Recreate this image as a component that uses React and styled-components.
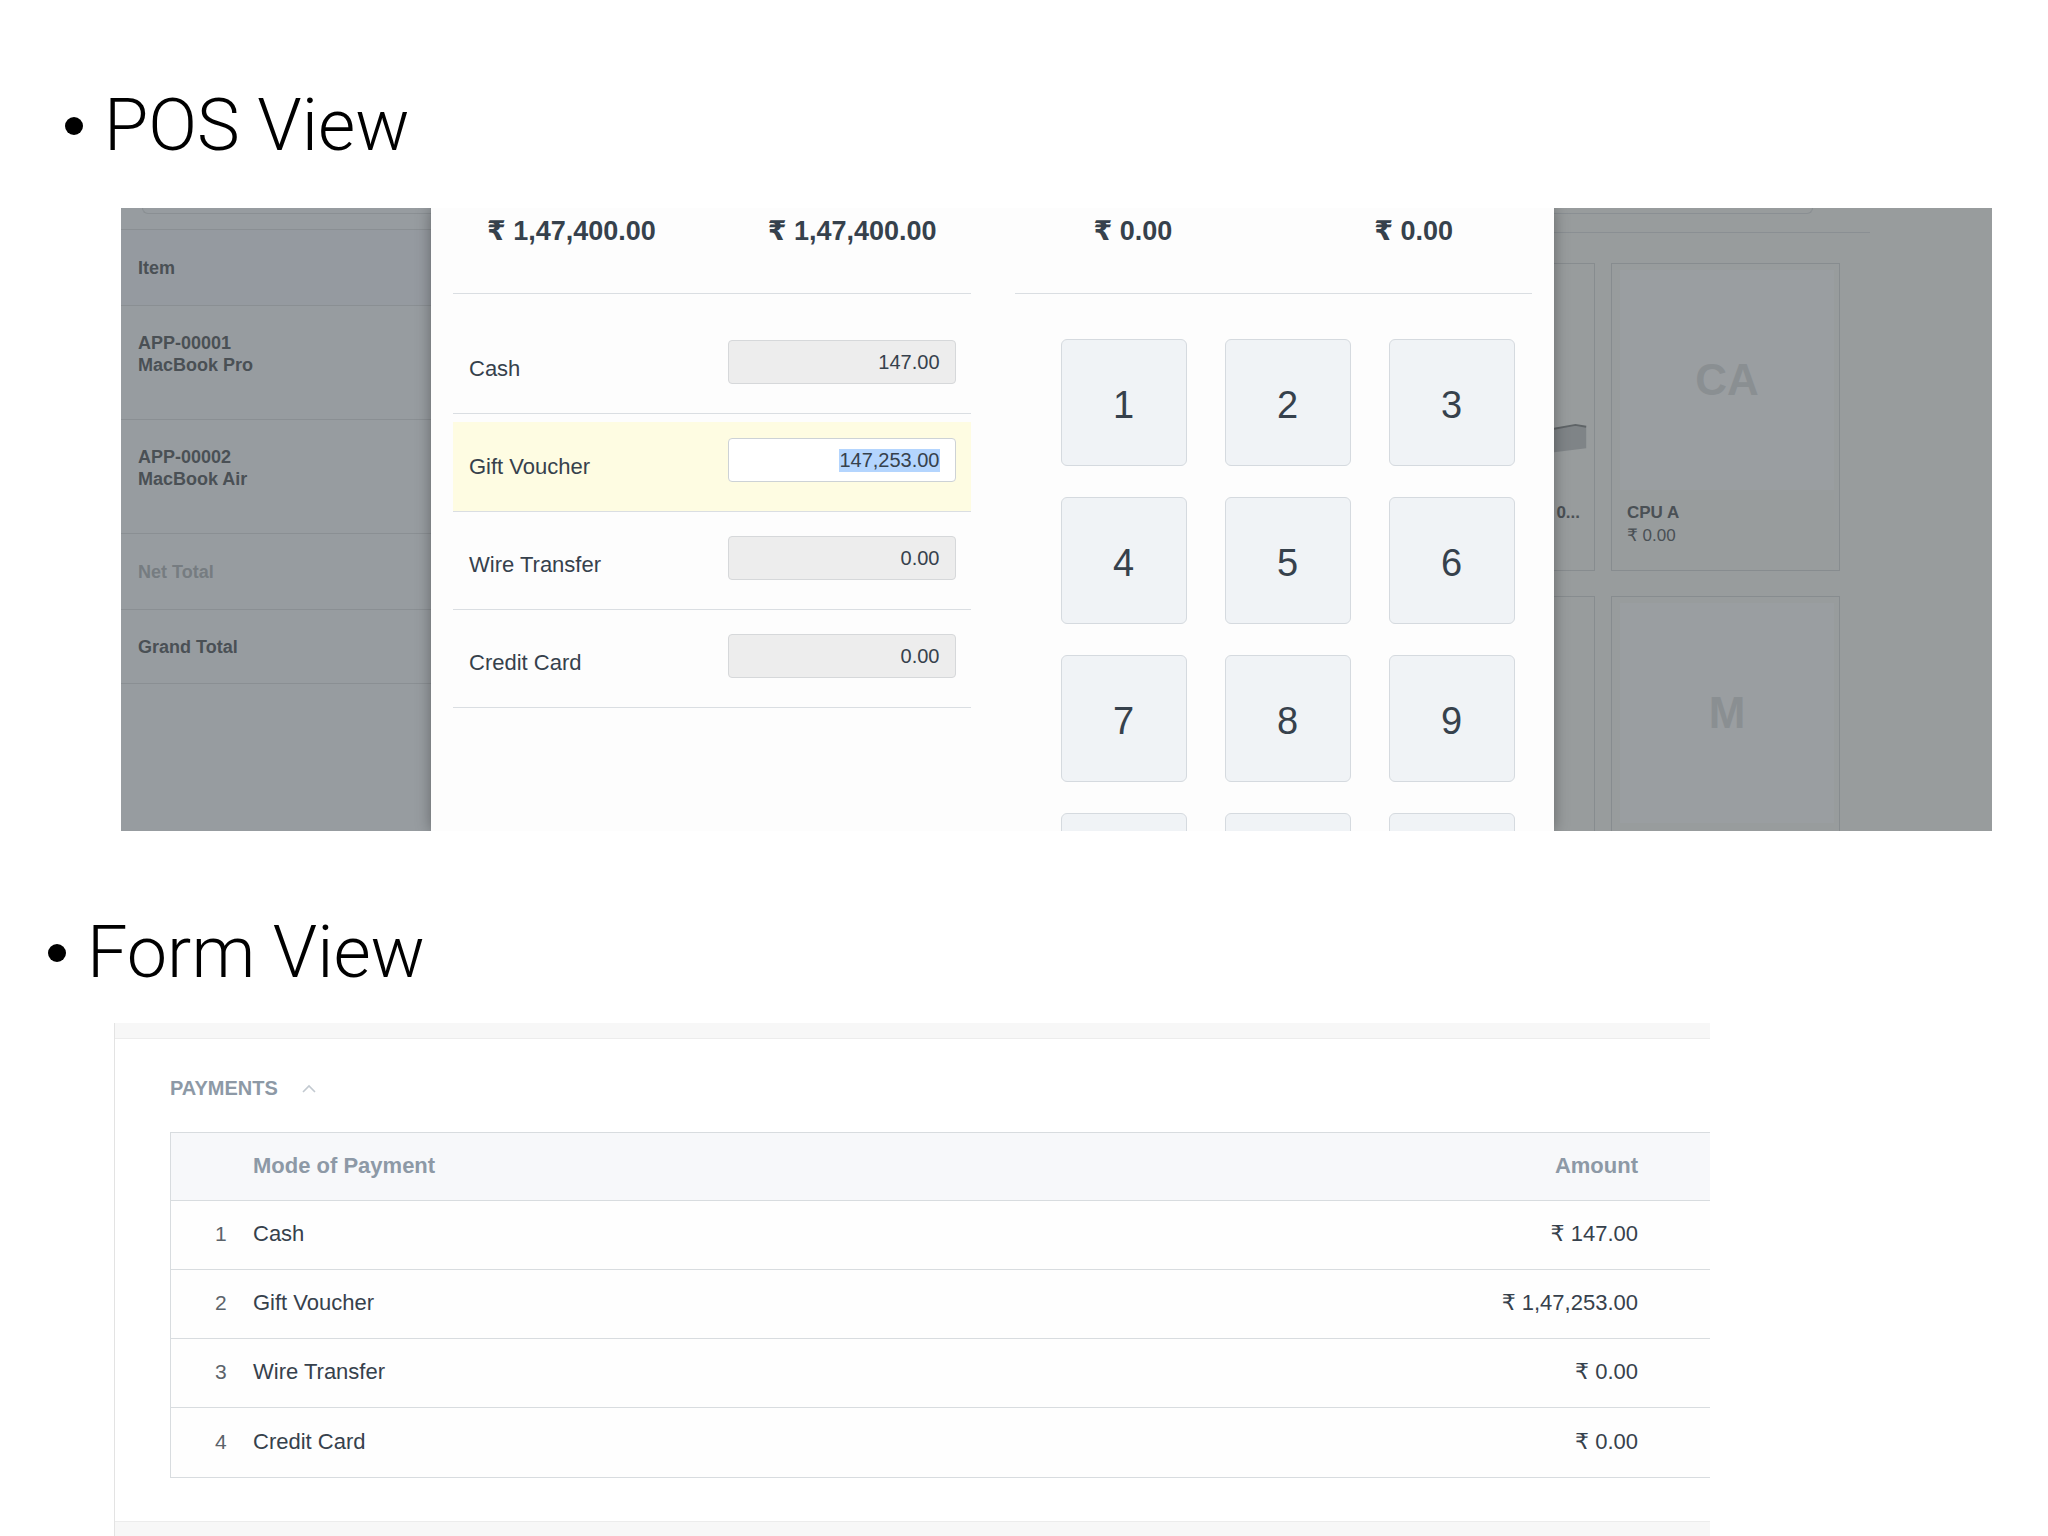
import React from 'react';
import styled, { createGlobalStyle } from 'styled-components';

const GlobalStyle = createGlobalStyle`
  html, body {
    margin: 0;
    padding: 0;
    background: #fff;
  }
  body {
    font-family: "Liberation Sans", Arial, "DejaVu Sans", sans-serif;
    color: #36414c;
  }
  * {
    box-sizing: border-box;
  }
`;

const Page = styled.div`
  display: flex;
  flex-direction: column;
  width: 2048px;
  height: 1536px;
  padding-top: 90px;
  overflow: hidden;
`;

const Heading = styled.h1`
  display: flex;
  align-items: center;
  gap: 21px;
  height: 72px;
  flex-shrink: 0;
  margin: ${(p) => p.$top}px 0 0 ${(p) => p.$indent}px;
  font-family: Roboto, "Liberation Sans", sans-serif;
  font-weight: 300;
  font-size: 72px;
  line-height: 72px;
  color: #000;
`;

const Bullet = styled.span`
  width: 18px;
  height: 18px;
  flex-shrink: 0;
  border-radius: 50%;
  background: #000;
`;

/* ---------- POS screenshot ---------- */

const PosShot = styled.div`
  display: flex;
  flex-shrink: 0;
  width: 1871px;
  height: 623px;
  margin: 46px 0 0 121px;
  overflow: hidden;
`;

const SidePane = styled.div`
  display: flex;
  flex-direction: column;
  width: ${(p) => p.$width}px;
  flex-shrink: 0;
  background: ${(p) => p.$bg};
  overflow: hidden;

  & > * {
    flex-shrink: 0;
  }
`;

const SearchEdge = styled.div`
  height: 6px;
  border: 1px solid #8a8f93;
  border-top: none;
  ${(p) =>
    p.$side === 'left'
      ? 'margin-left: 21px; border-right: none; border-radius: 0 0 0 6px;'
      : 'width: 259px; border-left: none; border-radius: 0 0 6px 0;'}
`;

const CartRow = styled.div`
  display: flex;
  flex-direction: column;
  justify-content: ${(p) => (p.$item ? 'flex-start' : 'center')};
  height: ${(p) => p.$h}px;
  padding: ${(p) => (p.$item ? '26px' : '0')} 17px 0;
  border-bottom: 1px solid #8a8f93;
  background: ${(p) => (p.$head ? '#959aa0' : 'transparent')};
  ${(p) => p.$head && 'margin-top: 15px; border-top: 1px solid #8a8f93;'}
`;

const CartText = styled.div`
  font-size: 18px;
  font-weight: bold;
  line-height: 22px;
  color: ${(p) => (p.$muted ? '#767c81' : '#4a5055')};
`;

const Modal = styled.div`
  position: relative;
  z-index: 1;
  display: grid;
  grid-template-columns: 1fr 1fr;
  width: 1123px;
  flex-shrink: 0;
  background: #fdfdfd;
  box-shadow: 0 0 14px rgba(0, 0, 0, 0.35);
`;

const ModalHalf = styled.div`
  display: flex;
  flex-direction: column;
`;

const AmountRow = styled.div`
  display: grid;
  grid-template-columns: 1fr 1fr;
  height: 85px;
  padding-top: 7px;
`;

const Amount = styled.div`
  text-align: center;
  font-size: 27px;
  font-weight: bold;
  line-height: 32px;
  color: #36414c;
`;

const HalfBody = styled.div`
  margin: 0 22px;
  border-top: 1px solid #dadee2;
`;

const PaymentList = styled.div`
  padding-top: 22px;
`;

const PayRow = styled.div`
  padding-top: 8px;
  border-bottom: 1px solid #dadee2;
`;

const PayInner = styled.div`
  display: flex;
  justify-content: space-between;
  align-items: center;
  height: 89px;
  padding: 0 15px 0 16px;
  background: ${(p) => (p.$active ? '#fefce2' : 'transparent')};
`;

const PayLabel = styled.span`
  font-size: 22px;
  color: #36414c;
`;

const PayInput = styled.div`
  display: flex;
  align-items: center;
  justify-content: flex-end;
  align-self: flex-start;
  width: 228px;
  height: 44px;
  margin-top: 16px;
  padding-right: 15px;
  border: 1px solid ${(p) => (p.$active ? '#cdd2d6' : '#d6d8da')};
  border-radius: 4px;
  background: ${(p) => (p.$active ? '#fff' : '#ededed')};
  font-size: 20px;
  color: #36414c;
`;

const Selected = styled.span`
  background: #b4d5fe;
`;

const Keypad = styled.div`
  display: grid;
  grid-template-columns: repeat(3, 126px);
  column-gap: 38px;
  row-gap: 31px;
  padding: 45px 0 0 46px;
`;

const Key = styled.div`
  display: flex;
  align-items: center;
  justify-content: center;
  height: 127px;
  padding-top: 6px;
  border: 1px solid #d5dadf;
  border-radius: 6px;
  background: #f0f3f6;
  font-size: 38px;
  color: #36414c;
`;

const ShelfLine = styled.div`
  width: 316px;
  margin-top: 18px;
  border-top: 1px solid #8a8f93;
`;

const CardGrid = styled.div`
  display: grid;
  grid-template-columns: 41px 229px;
  grid-auto-rows: 308px;
  column-gap: 16px;
  row-gap: 25px;
  margin-top: 30px;
`;

const Card = styled.div`
  display: flex;
  flex-direction: column;
  border: 1px solid #878c8f;
  ${(p) => p.$cut && 'border-left: none;'}
  overflow: hidden;
`;

const CardImage = styled.div`
  display: flex;
  align-items: center;
  justify-content: center;
  height: 220px;
  flex-shrink: 0;
  margin: ${(p) => (p.$cut ? '6px 0 0 0' : '6px 5px 0 8px')};
  background: ${(p) => (p.$cut ? 'transparent' : '#9a9ea1')};
  font-size: 44px;
  font-weight: bold;
  color: #8a8f92;
`;

const CardCaption = styled.div`
  display: flex;
  flex-direction: column;
  align-items: ${(p) => (p.$cut ? 'flex-end' : 'flex-start')};
  padding: ${(p) => (p.$cut ? '11px 14px 0 0' : '11px 0 0 15px')};
  font-size: 17px;
  line-height: 23px;
  color: #4a5055;
  white-space: nowrap;
`;

const CardName = styled.span`
  font-weight: bold;
`;

/* ---------- Form screenshot ---------- */

const FormShot = styled.div`
  display: flex;
  flex-direction: column;
  flex: 1;
  width: 1596px;
  margin: 34px 0 0 114px;
  border-left: 1px solid #e3e3e3;
`;

const Strip = styled.div`
  height: ${(p) => p.$h}px;
  flex-shrink: 0;
  background: #f7f7f7;
  ${(p) =>
    p.$bottom
      ? 'margin-top: auto; border-top: 1px solid #ececec;'
      : 'border-bottom: 1px solid #ececec;'}
`;

const Section = styled.div`
  padding-left: 55px;
`;

const SectionHead = styled.div`
  display: flex;
  align-items: center;
  gap: 24px;
  height: 26px;
  margin: 36px 0 31px;
  font-size: 20px;
  font-weight: bold;
  color: #8d99a6;
`;

const Table = styled.div`
  border: 1px solid #d8dcdf;
  border-right: none;
`;

const TRow = styled.div`
  display: grid;
  grid-template-columns: 38px 1fr auto;
  align-items: center;
  height: ${(p) => (p.$head ? 68 : 69)}px;
  padding: 0 72px 2px 44px;
  background: ${(p) => (p.$head ? '#f7f8fa' : '#fefefe')};
  font-size: 22px;
  color: ${(p) => (p.$head ? '#8d99a6' : '#36414c')};
  font-weight: ${(p) => (p.$head ? 'bold' : 'normal')};
  &:not(:last-child) {
    border-bottom: 1px solid #d8dcdf;
  }
`;

const TIdx = styled.span`
  font-size: 21px;
  color: #5b636a;
`;

const payments = [
  { mode: 'Cash', value: '147.00', amount: '₹ 147.00' },
  { mode: 'Gift Voucher', value: '147,253.00', amount: '₹ 1,47,253.00', active: true },
  { mode: 'Wire Transfer', value: '0.00', amount: '₹ 0.00' },
  { mode: 'Credit Card', value: '0.00', amount: '₹ 0.00' },
];

// the fourth keypad row is cut off by the screenshot edge
const keys = ['1', '2', '3', '4', '5', '6', '7', '8', '9', '', '', ''];

const Laptop = () => (
  <svg width="41" height="220" viewBox="0 0 41 220">
    <path d="M0 160 L22 156 L33 158 L33 180 L0 184 Z" fill="#7f8487" />
    <path d="M0 160 L22 156 L33 158" stroke="#5f6467" strokeWidth="2" fill="none" />
  </svg>
);

const ChevronUp = () => (
  <svg width="14" height="9" viewBox="0 0 14 9">
    <path d="M1 8 L7 2 L13 8" stroke="#c2c9d0" strokeWidth="1.6" fill="none" />
  </svg>
);

const App = () => {
  return (
    <Page>
      <GlobalStyle />
      <Heading $top={0} $indent={65}>
        <Bullet />
        POS View
      </Heading>

      <PosShot>
        <SidePane $width={310} $bg="#979ca0">
          <SearchEdge $side="left" />
          <CartRow $head $h={77}>
            <CartText>Item</CartText>
          </CartRow>
          <CartRow $item $h={114}>
            <CartText>APP-00001</CartText>
            <CartText>MacBook Pro</CartText>
          </CartRow>
          <CartRow $item $h={114}>
            <CartText>APP-00002</CartText>
            <CartText>MacBook Air</CartText>
          </CartRow>
          <CartRow $h={76}>
            <CartText $muted>Net Total</CartText>
          </CartRow>
          <CartRow $h={74}>
            <CartText>Grand Total</CartText>
          </CartRow>
        </SidePane>

        <Modal>
          <ModalHalf>
            <AmountRow>
              <Amount>₹ 1,47,400.00</Amount>
              <Amount>₹ 1,47,400.00</Amount>
            </AmountRow>
            <HalfBody>
              <PaymentList>
                {payments.map((p) => (
                  <PayRow key={p.mode}>
                    <PayInner $active={p.active}>
                      <PayLabel>{p.mode}</PayLabel>
                      <PayInput $active={p.active}>
                        {p.active ? <Selected>{p.value}</Selected> : p.value}
                      </PayInput>
                    </PayInner>
                  </PayRow>
                ))}
              </PaymentList>
            </HalfBody>
          </ModalHalf>

          <ModalHalf>
            <AmountRow>
              <Amount>₹ 0.00</Amount>
              <Amount>₹ 0.00</Amount>
            </AmountRow>
            <HalfBody>
              <Keypad>
                {keys.map((k, i) => (
                  <Key key={i}>{k}</Key>
                ))}
              </Keypad>
            </HalfBody>
          </ModalHalf>
        </Modal>

        <SidePane $width={438} $bg="#989c9d">
          <SearchEdge $side="right" />
          <ShelfLine />
          <CardGrid>
            <Card $cut>
              <CardImage $cut>
                <Laptop />
              </CardImage>
              <CardCaption $cut>
                <CardName>0...</CardName>
              </CardCaption>
            </Card>
            <Card>
              <CardImage>CA</CardImage>
              <CardCaption>
                <CardName>CPU A</CardName>
                <span>₹ 0.00</span>
              </CardCaption>
            </Card>
            <Card $cut />
            <Card>
              <CardImage>M</CardImage>
            </Card>
          </CardGrid>
        </SidePane>
      </PosShot>

      <Heading $top={86} $indent={48}>
        <Bullet />
        Form View
      </Heading>

      <FormShot>
        <Strip $h={16} />
        <Section>
          <SectionHead>
            PAYMENTS
            <ChevronUp />
          </SectionHead>
          <Table>
            <TRow $head>
              <span />
              <span>Mode of Payment</span>
              <span>Amount</span>
            </TRow>
            {payments.map((p, i) => (
              <TRow key={p.mode}>
                <TIdx>{i + 1}</TIdx>
                <span>{p.mode}</span>
                <span>{p.amount}</span>
              </TRow>
            ))}
          </Table>
        </Section>
        <Strip $bottom $h={15} />
      </FormShot>
    </Page>
  );
};

export default App;
